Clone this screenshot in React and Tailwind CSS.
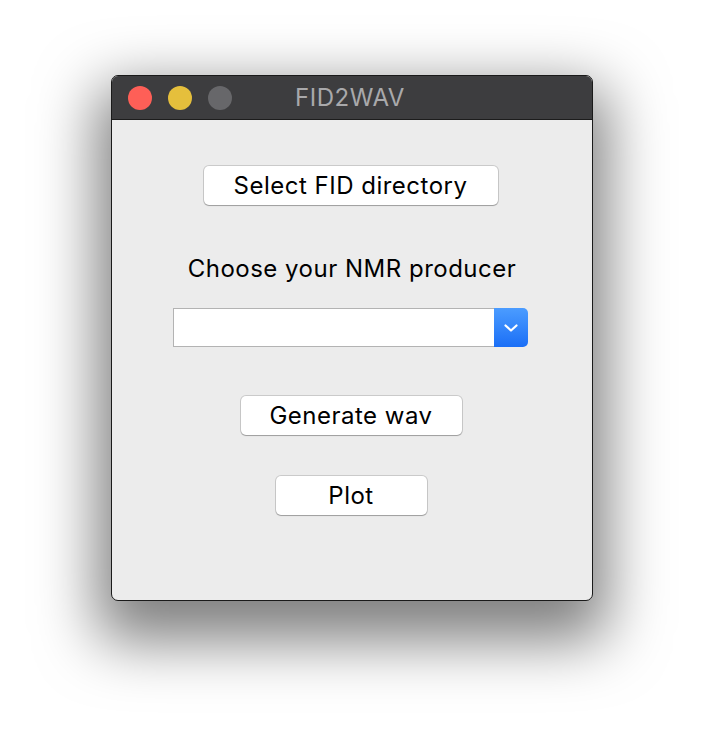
// Fenêtre macOS « FID2WAV » — petite app Tk avec 3 boutons et un menu déroulant

const FONT = { fontFamily: 'Inter, "Liberation Sans", Arial, sans-serif' };

function MacButton({ label, width }) {
  return (
    <button
      className={`h-[39px] ${width} bg-white rounded-[5px] text-[24px] tracking-[0.5px] text-black leading-none shadow-[0_0_0_1px_rgba(0,0,0,0.14),0_1px_1px_rgba(0,0,0,0.22)]`}
      style={FONT}
    >
      {label}
    </button>
  );
}

export default function App() {
  return (
    <div className="w-[704px] h-[748px] bg-white overflow-hidden" style={FONT}>
      <div className="ml-[111px] mt-[75px] w-[482px] h-[526px] rounded-[7px] border border-[#1a1a1a] bg-[#ececec] overflow-hidden flex flex-col shadow-[0_26px_60px_14px_rgba(0,0,0,0.5)]">
        {/* ====== BARRE DE TITRE ====== */}
        <div className="h-[44px] bg-[#3d3d3f] border-b border-[#1c1c1c] flex items-center relative shrink-0">
          <div className="flex items-center gap-[16px] pl-[16px]">
            <span className="w-[24px] h-[24px] rounded-full bg-[#fe5f57]" />
            <span className="w-[24px] h-[24px] rounded-full bg-[#e5bf3c]" />
            <span className="w-[24px] h-[24px] rounded-full bg-[#67676a]" />
          </div>
          <div className="absolute inset-0 flex items-center justify-center pointer-events-none">
            <span className="text-[24px] tracking-[0.5px] text-[#a9a9ab] ml-[-4px]">FID2WAV</span>
          </div>
        </div>

        {/* ====== CONTENU ====== */}
        <div className="flex flex-col items-center pt-[46px]">
          <div className="ml-[-3px]">
            <MacButton label="Select FID directory" width="w-[294px]" />
          </div>

          <div className="mt-[51px] text-[24px] tracking-[0.5px] text-black leading-[26px]">Choose your NMR producer</div>

          <div className="mt-[26px] w-[355px] h-[39px] flex ml-[-3px]">
            <div className="flex-1 bg-white border border-[#b3b3b3] border-r-0" />
            <div className="w-[34px] h-full rounded-r-[5px] bg-gradient-to-b from-[#4b9cff] to-[#1a6ef6] flex items-center justify-center">
              <svg width="16" height="10" viewBox="0 0 16 10" fill="none">
                <path d="M2.5 2.5l5.5 5 5.5-5" stroke="white" strokeWidth="2.2" strokeLinecap="round" strokeLinejoin="round" />
              </svg>
            </div>
          </div>

          <div className="mt-[49px] ml-[-2px]">
            <MacButton label="Generate wav" width="w-[221px]" />
          </div>

          <div className="mt-[41px] ml-[-2px]">
            <MacButton label="Plot" width="w-[151px]" />
          </div>
        </div>
      </div>
    </div>
  );
}
